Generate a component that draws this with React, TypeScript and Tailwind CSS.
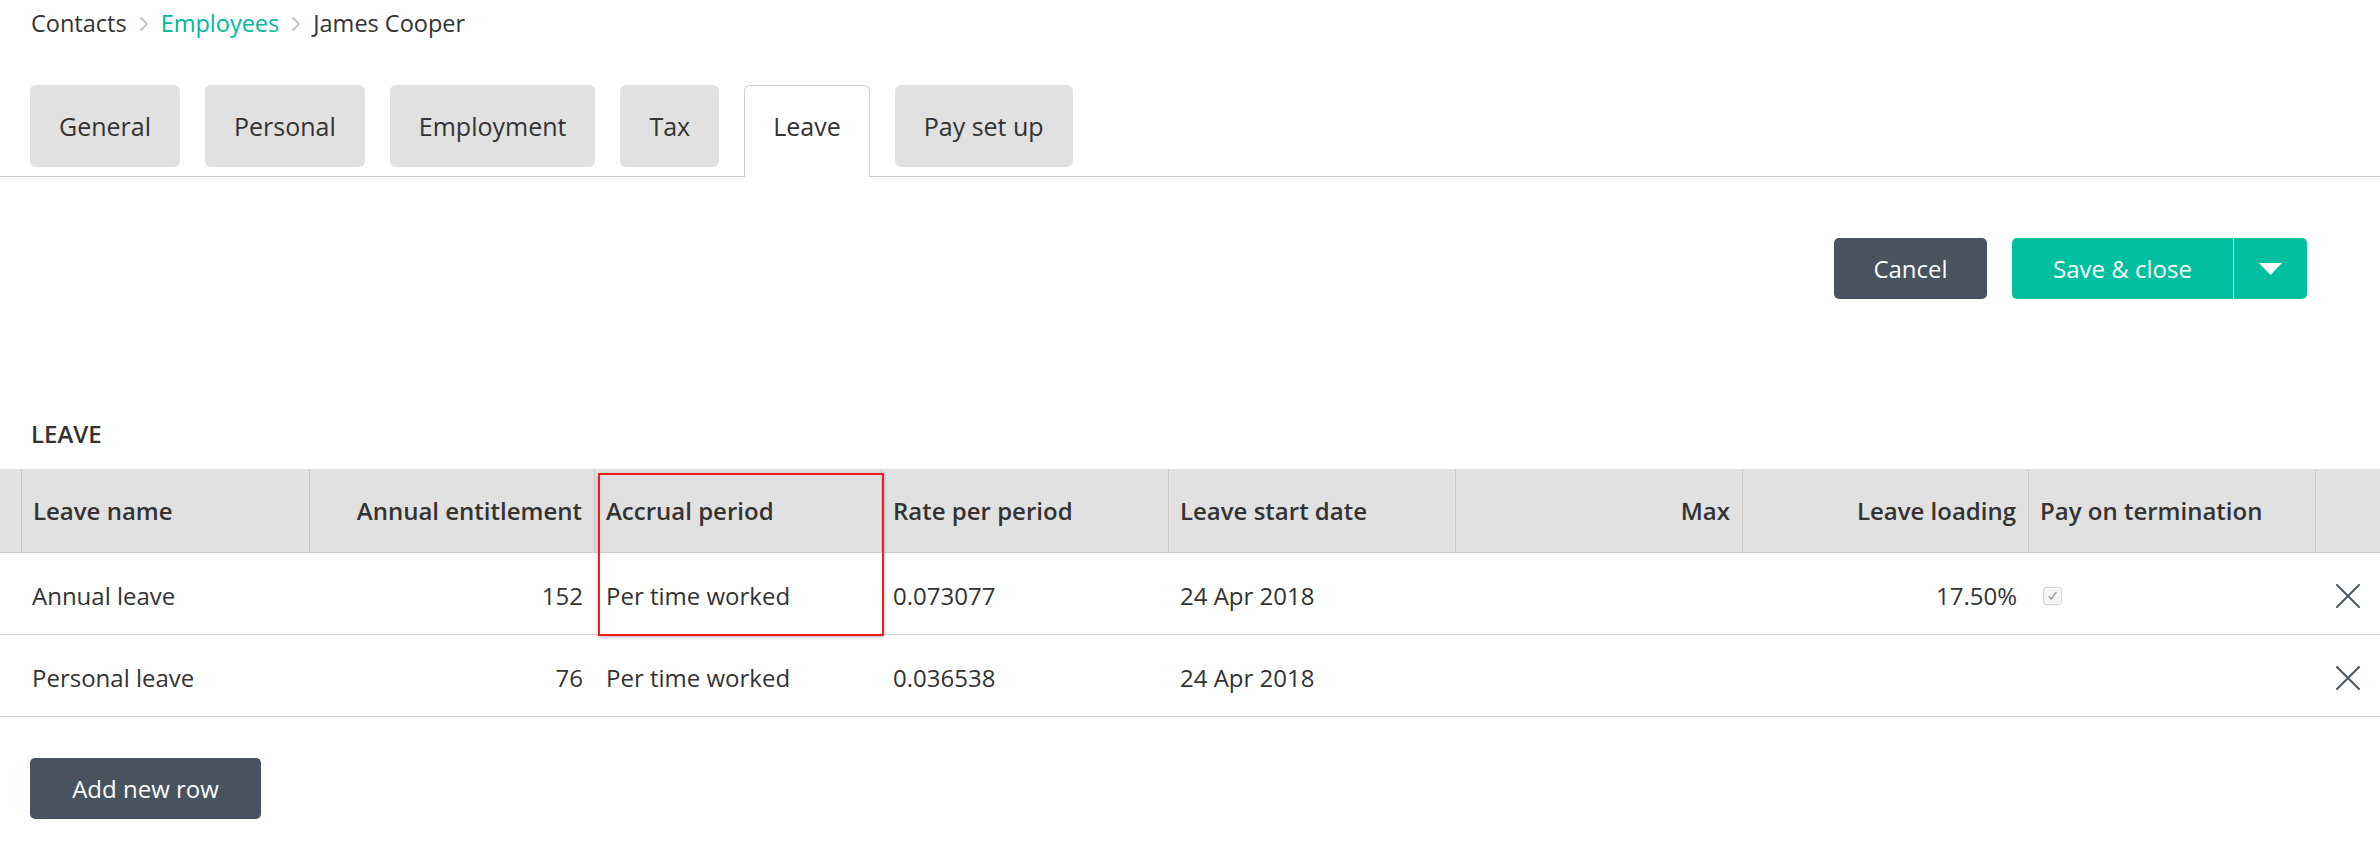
import { ChevronRight } from 'lucide-react'

interface LeaveRow {
  name: string
  entitlement: string
  accrual: string
  rate: string
  startDate: string
  max: string
  loading: string
  payOnTermination: boolean
}

const tabs = ['General', 'Personal', 'Employment', 'Tax', 'Leave', 'Pay set up']

const rows: LeaveRow[] = [
  {
    name: 'Annual leave',
    entitlement: '152',
    accrual: 'Per time worked',
    rate: '0.073077',
    startDate: '24 Apr 2018',
    max: '',
    loading: '17.50%',
    payOnTermination: true,
  },
  {
    name: 'Personal leave',
    entitlement: '76',
    accrual: 'Per time worked',
    rate: '0.036538',
    startDate: '24 Apr 2018',
    max: '',
    loading: '',
    payOnTermination: false,
  },
]

const gridCols =
  'grid grid-cols-[21px_288px_285px_287px_287px_287px_287px_286px_287px_1fr]'

function HeaderCell({ label, right }: { label?: string; right?: boolean }) {
  return (
    <div
      className={`flex items-center border-l border-[#c9c9c9] pl-[11px] pr-[12px] font-semibold ${
        right ? 'justify-end' : ''
      }`}
    >
      {label}
    </div>
  )
}

function Checkbox() {
  return (
    <span className="flex h-[18px] w-[19px] items-center justify-center rounded-[3px] border border-[#d2d2d2] bg-[#f5f5f5]">
      <svg width="11" height="10" viewBox="0 0 11 10" fill="none">
        <path d="M2 5.5 4.3 8 9 1.5" stroke="#9a9a9a" strokeWidth="1.4" strokeLinecap="round" strokeLinejoin="round" />
      </svg>
    </span>
  )
}

function CloseIcon() {
  return (
    <svg width="24" height="24" viewBox="0 0 24 24" fill="none">
      <path d="M1 1 23 23M23 1 1 23" stroke="#4b5661" strokeWidth="2" strokeLinecap="round" />
    </svg>
  )
}

export default function App() {
  return (
    <div className="min-h-screen bg-white font-['Open_Sans',sans-serif] text-[24px] text-[#333]">
      {/* Breadcrumb */}
      <nav className="flex items-center gap-[5px] px-[31px] pt-[7px] text-[23.5px] leading-[33px]">
        <span>Contacts</span>
        <ChevronRight size={24} strokeWidth={2.2} className="text-[#c6c6c6]" />
        <span className="text-[#00b89a]">Employees</span>
        <ChevronRight size={24} strokeWidth={2.2} className="text-[#c6c6c6]" />
        <span>James Cooper</span>
      </nav>

      {/* Tabs */}
      <div className="mt-[45px] flex h-[92px] items-start gap-[25px] border-b border-[#cfcfcf] px-[30px] text-[25px]">
        {tabs.map((tab) =>
          tab === 'Leave' ? (
            <div
              key={tab}
              className="flex h-[92px] items-start rounded-t-[6px] border border-b-0 border-[#cfcfcf] bg-white px-[28px] pt-[24px] leading-[33px]"
            >
              {tab}
            </div>
          ) : (
            <div
              key={tab}
              className="flex h-[82px] items-center rounded-[6px] bg-[#e1e1e1] px-[29px] leading-[33px]"
            >
              {tab}
            </div>
          )
        )}
      </div>

      {/* Actions */}
      <div className="flex justify-end gap-[25px] pr-[73px] pt-[61px]">
        <button className="h-[61px] w-[153px] rounded-[5px] bg-[#48535f] text-white">Cancel</button>
        <div className="flex h-[61px] overflow-hidden rounded-[5px] bg-[#00bf9f] text-white">
          <button className="w-[221px]">Save &amp; close</button>
          <button className="flex w-[74px] items-center justify-center border-l border-white">
            <svg width="23" height="12" viewBox="0 0 23 12">
              <polygon points="0,0 23,0 11.5,12" fill="#fff" />
            </svg>
          </button>
        </div>
      </div>

      {/* Leave section */}
      <h2 className="mt-[118px] px-[31px] font-semibold leading-[33px]">LEAVE</h2>

      <div className="relative mt-[19px]">
        <div className={`${gridCols} h-[84px] border-b border-[#cdcdcd] bg-[#e1e1e1]`}>
          <div />
          <HeaderCell label="Leave name" />
          <HeaderCell label="Annual entitlement" right />
          <HeaderCell label="Accrual period" />
          <HeaderCell label="Rate per period" />
          <HeaderCell label="Leave start date" />
          <HeaderCell label="Max" right />
          <HeaderCell label="Leave loading" right />
          <HeaderCell label="Pay on termination" />
          <HeaderCell />
        </div>

        {rows.map((row) => (
          <div key={row.name} className={`${gridCols} h-[82px] border-b border-[#d3d3d3] pt-[4px]`}>
            <div />
            <div className="flex items-center px-[11px]">{row.name}</div>
            <div className="flex items-center justify-end px-[11px]">{row.entitlement}</div>
            <div className="flex items-center px-[12px]">{row.accrual}</div>
            <div className="flex items-center px-[12px]">{row.rate}</div>
            <div className="flex items-center px-[12px]">{row.startDate}</div>
            <div className="flex items-center justify-end px-[12px]">{row.max}</div>
            <div className="flex items-center justify-end px-[11px]">{row.loading}</div>
            <div className="flex items-center pl-[15px]">{row.payOnTermination && <Checkbox />}</div>
            <div className="flex items-center justify-center">
              <CloseIcon />
            </div>
          </div>
        ))}

        {/* annotation highlight */}
        <div className="pointer-events-none absolute left-[598px] top-[4px] h-[163px] w-[286px] border-2 border-[#f21d1d] shadow-[0_1px_3px_rgba(0,0,0,0.3)]" />
      </div>

      <div className="px-[30px] pt-[41px]">
        <button className="h-[61px] w-[231px] rounded-[5px] bg-[#48535f] text-white">Add new row</button>
      </div>
    </div>
  )
}
